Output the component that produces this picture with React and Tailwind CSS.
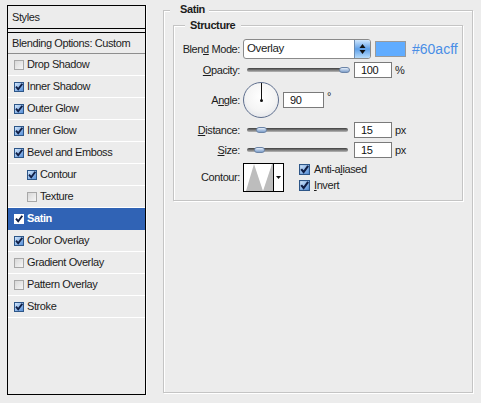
import React, { useId } from "react";

function Cb({ on, active, size = 10 }) {
  const id = "g" + useId().replace(/[^a-zA-Z0-9]/g, "");
  return (
    <svg width={size} height={size} viewBox="0 0 10 10" className="block shrink-0">
      <defs>
        <linearGradient id={id} x1="0" y1="0" x2="1" y2="1">
          {on ? (
            <>
              <stop offset="0" stopColor="#d9ebfd" />
              <stop offset="1" stopColor="#4f8ad6" />
            </>
          ) : (
            <>
              <stop offset="0" stopColor="#d6d6d6" />
              <stop offset="1" stopColor="#f8f8f8" />
            </>
          )}
        </linearGradient>
      </defs>
      <rect
        x="0.5"
        y="0.5"
        width="9"
        height="9"
        fill={active ? "#ffffff" : `url(#${id})`}
        stroke={active ? "#ffffff" : on ? "#2d5688" : "#a8a8a8"}
      />
      {on && (
        <path d="M2 4.6 L4.2 7.3 L8.3 1.8" fill="none" stroke="#101e45" strokeWidth="1.9" />
      )}
    </svg>
  );
}

const items = [
  ["Drop Shadow", false, false],
  ["Inner Shadow", true, false],
  ["Outer Glow", true, false],
  ["Inner Glow", true, false],
  ["Bevel and Emboss", true, false],
  ["Contour", true, true],
  ["Texture", false, true],
  ["Satin", true, false, true],
  ["Color Overlay", true, false],
  ["Gradient Overlay", false, false],
  ["Pattern Overlay", false, false],
  ["Stroke", true, false],
];

function Slider({ pos }) {
  return (
    <div className="relative ml-[4px] h-[10px] w-[101px] shrink-0">
      <div className="absolute left-0 right-0 top-[3px] h-[4px] rounded-full bg-gradient-to-b from-[#3f3f3f] to-[#b9b9b9]" />
      <div
        className="absolute top-[2px] h-[6px] w-[11px] rounded-full border border-[#6c85a8] bg-gradient-to-b from-[#e4eefa] to-[#7e9ec9]"
        style={{ left: pos - 5 }}
      />
    </div>
  );
}

function Field({ value, w = "w-[38px]", ml = "ml-[6px]" }) {
  return (
    <div
      className={`${w} ${ml} h-[16px] shrink-0 border border-[#7a7a7a] bg-white pl-[6px] text-[11px] leading-[14px] text-[#111]`}
    >
      {value}
    </div>
  );
}

function Label({ children }) {
  return <div className="w-[66px] shrink-0 text-right">{children}</div>;
}

export default function App() {
  return (
    <div className="flex h-[403px] w-[481px] items-start bg-[#ececec] font-['Liberation_Sans',Arial,sans-serif] text-[11px] tracking-[-0.4px] text-[#1c1c1c]">
      {/* Left styles list */}
      <div className="ml-[7px] mt-[5px] flex h-[390px] w-[139px] shrink-0 flex-col border border-black shadow-[1px_0_0_#fafafa]">
        <div className="flex h-[23px] items-center border-b border-black pl-[4px]">Styles</div>
        <div className="h-[3px]" />
        <div className="flex h-[22px] items-center border-y border-t-black border-b-[#8e8e8e] pl-[4px]">
          Blending Options: Custom
        </div>
        {items.map(([name, on, indent, active]) => (
          <div
            key={name}
            className={`flex h-[22px] items-center gap-[3px] border-b ${
              active ? "border-[#3063b5] bg-[#3063b5] font-bold text-white" : "border-white"
            } ${indent ? "pl-[19px]" : "pl-[6px]"}`}
          >
            <Cb on={on} active={active} />
            <span>{name}</span>
          </div>
        ))}
      </div>

      {/* Right: Satin group */}
      <div className="relative ml-[17px] mt-[10px] h-[383px] w-[310px] shrink-0 border border-[#c4c4c4] px-[9px] pt-[14px] shadow-[inset_1px_1px_0_#fff,1px_1px_0_#fff]">
        <div className="absolute -top-[8px] left-[6px] bg-[#ececec] pl-[10px] pr-[4px] font-bold leading-[13px]">
          Satin
        </div>

        <div className="relative flex flex-col border border-[#c4c4c4] pb-[8px] pt-[13px] shadow-[inset_1px_1px_0_#fff,1px_1px_0_#fff]">
          <div className="absolute -top-[7px] left-[11px] bg-[#ececec] pl-[5px] pr-[6px] font-bold leading-[13px]">
            Structure
          </div>

          {/* Blend mode */}
          <div className="flex h-[20px] items-center">
            <Label>
              Blen<span className="underline">d</span> Mode:
            </Label>
            <div className="ml-[3px] flex h-[20px] w-[128px] shrink-0 items-center rounded-[3px] border border-[#8a8a8a] bg-white">
              <span className="pl-[3px] text-[11.5px]">Overlay</span>
              <div className="ml-auto flex h-full w-[16px] items-center justify-center rounded-r-[2px] border-l border-[#6b8bb0] bg-gradient-to-b from-[#cfe6fc] via-[#5d9fe8] to-[#b7dcfb]">
                <svg width="7" height="12" viewBox="0 0 7 12">
                  <path d="M3.5 1 L6.5 5 L0.5 5 Z" fill="#111" />
                  <path d="M0.5 7 L6.5 7 L3.5 11 Z" fill="#111" />
                </svg>
              </div>
            </div>
            <div className="ml-[4px] h-[16px] w-[31px] shrink-0 border border-[#9a9a9a] bg-[#60acff]" />
            <span className="ml-[6px] text-[14px] tracking-normal text-[#4a8ee6]">#60acff</span>
          </div>

          {/* Opacity */}
          <div className="mt-[3px] flex h-[16px] items-center">
            <Label>
              <span className="underline">O</span>pacity:
            </Label>
            <div className="ml-[3px]" />
            <Slider pos={97} />
            <Field value="100" />
            <span className="ml-[3px]">%</span>
          </div>

          {/* Angle */}
          <div className="mt-[4px] flex h-[36px] items-center">
            <Label>
              A<span className="underline">n</span>gle:
            </Label>
            <div className="relative ml-[3px] h-[36px] w-[36px] shrink-0 rounded-full border border-[#5f6f8e] bg-[radial-gradient(circle_at_50%_40%,#ffffff_0%,#f4f4f4_55%,#d8dce4_100%)]">
              <div className="absolute left-[16.5px] top-0 h-[17px] w-px bg-[#111]" />
              <div className="absolute left-[15.5px] top-[15.5px] h-[3px] w-[3px] rounded-full bg-[#111]" />
            </div>
            <Field value="90" w="w-[41px]" ml="ml-[4px]" />
            <span className="ml-[3px] -translate-y-[4px]">°</span>
          </div>

          {/* Distance */}
          <div className="mt-[4px] flex h-[16px] items-center">
            <Label>
              <span className="underline">D</span>istance:
            </Label>
            <div className="ml-[3px]" />
            <Slider pos={14} />
            <Field value="15" />
            <span className="ml-[3px]">px</span>
          </div>

          {/* Size */}
          <div className="mt-[4px] flex h-[16px] items-center">
            <Label>
              <span className="underline">S</span>ize:
            </Label>
            <div className="ml-[3px]" />
            <Slider pos={12} />
            <Field value="15" />
            <span className="ml-[3px]">px</span>
          </div>

          {/* Contour */}
          <div className="mt-[5px] flex h-[29px] items-start">
            <div className="self-center">
              <Label>Contour:</Label>
            </div>
            <div className="ml-[3px] flex h-[29px] w-[41px] shrink-0 border border-black bg-white">
              <svg width="29" height="27" viewBox="0 0 29 27" className="block">
                <path d="M2 27 L10 0 L19 27 L28 0 L29 0 L29 27 Z" fill="#bdbdbd" />
              </svg>
              <div className="flex flex-1 items-center justify-center border-l border-black">
                <svg width="5" height="3" viewBox="0 0 5 3">
                  <path d="M0 0 L5 0 L2.5 3 Z" fill="#111" />
                </svg>
              </div>
            </div>
            <div className="ml-[15px] mt-[1px] flex flex-col gap-[5px]">
              <div className="flex items-center gap-[4px] leading-[11px]">
                <Cb on size={11} />
                <span>
                  Anti-a<span className="underline">l</span>iased
                </span>
              </div>
              <div className="flex items-center gap-[4px] leading-[11px]">
                <Cb on size={11} />
                <span>
                  <span className="underline">I</span>nvert
                </span>
              </div>
            </div>
          </div>
        </div>
      </div>
    </div>
  );
}
